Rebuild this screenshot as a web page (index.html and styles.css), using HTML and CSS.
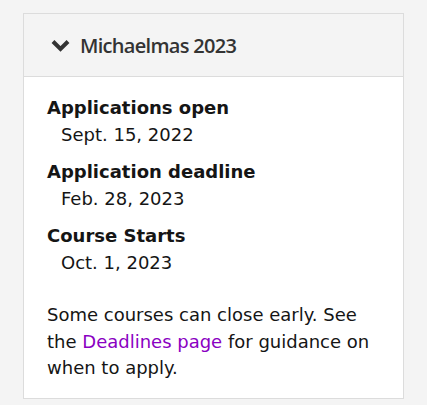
FILE: index.html
```html
<!DOCTYPE html>
<html>
<head>
<meta charset="utf-8">
<link rel="stylesheet" href="styles.css">
</head>
<body>
<div class="panel">
  <div class="panel-head">
    <svg class="chev" width="19" height="13" viewBox="0 0 19 13"><path d="M2 2.5 L9.5 10 L17 2.5" fill="none" stroke="#333" stroke-width="4"/></svg>
    <span class="title">Michaelmas 2023</span>
  </div>
  <div class="panel-body">
    <dl class="dates">
      <dt>Applications open</dt>
      <dd>Sept. 15, 2022</dd>
      <dt>Application deadline</dt>
      <dd>Feb. 28, 2023</dd>
      <dt>Course Starts</dt>
      <dd>Oct. 1, 2023</dd>
    </dl>
    <p class="note">Some courses can close early. See the <a href="#" class="link">Deadlines page</a> for guidance on when to apply.</p>
  </div>
</div>
</body>
</html>
```
FILE: styles.css
```css
html, body { margin: 0; padding: 0; }
body {
  background: #f4f4f4;
  font-family: "DejaVu Sans", Verdana, sans-serif;
  font-size: 18px;
  color: #151515;
  padding: 13px 23px 0 23px;
}
.panel {
  width: 379px;
  border: 1px solid #dcdcdc;
  background: #fff;
}
.panel-head {
  background: #f4f4f4;
  border-bottom: 1px solid #dcdcdc;
  height: 62px;
  display: flex;
  align-items: center;
  padding-left: 27px;
  gap: 10px;
}
.title {
  font-family: "Open Sans", sans-serif;
  font-weight: 600;
  font-size: 20px;
  letter-spacing: -0.7px;
  color: #333;
}
.chev { display: block; margin-top: 1px; }
.panel-body {
  padding: 17px 23px 16px 23px;
}
.dates { margin: 0; }
.dates dt {
  font-weight: bold;
  line-height: 27px;
  margin: 0;
}
.dates dd {
  margin: 0 0 10px 14px;
  line-height: 27px;
}
.note {
  margin: 26px 0 0 0;
  line-height: 26.5px;
}
.link { color: #8a00c2; text-decoration: none; }
```
